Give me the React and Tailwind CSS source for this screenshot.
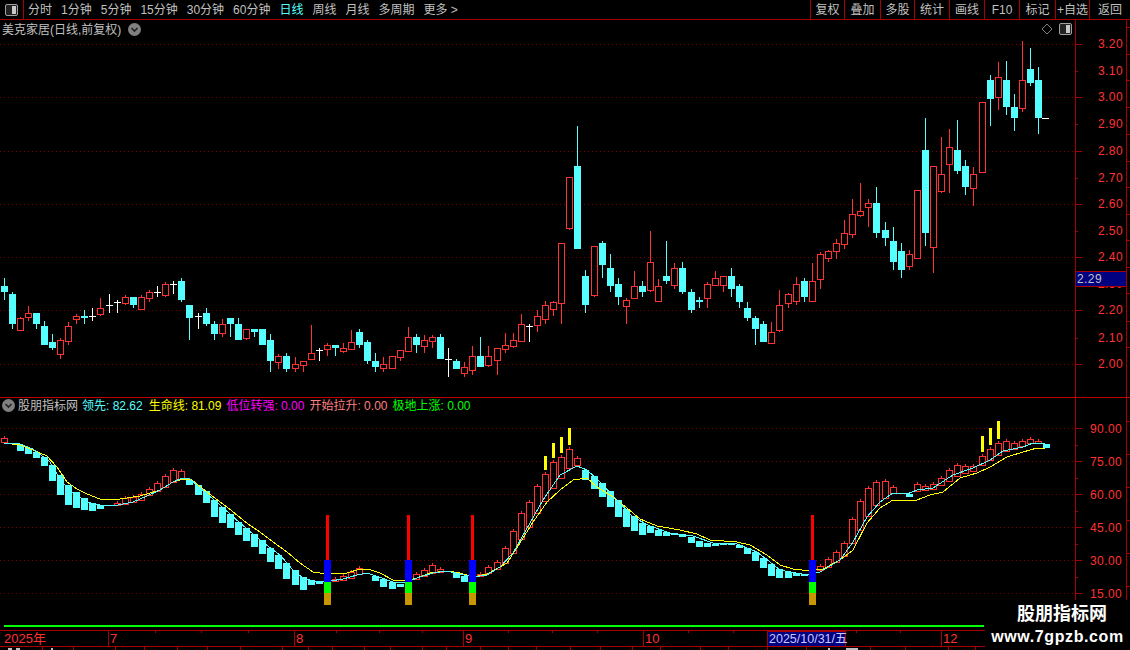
import React from 'react';

const FONT = '[font-family:"Liberation_Sans","Noto_Sans_CJK_SC",sans-serif]';
const RED = '#ff3232';
const CYAN = '#55ffff';
const AXIS = '#a80000';
const GRID = '#8a0000';

// x position of candle n, the terminal's bar spacing is not even
const BREAKS = [13, 24, 36, 48, 61, 73, 85, 97, 109, 121];
const cx = (n) => 4 + 8 * n + BREAKS.filter((b) => b <= n).length;

// [high, bodyTop, bodyBottom, low, type]
const CANDLES = [
  [278, 286, 292, 300, 'c'], [292, 294, 324, 329, 'c'], [317, 318, 330, 330, 'r'], [306, 313, 317, 321, 'r'],
  [313, 313, 324, 329, 'c'], [321, 326, 345, 345, 'c'], [334, 342, 348, 350, 'c'], [338, 340, 354, 359, 'r'],
  [322, 326, 341, 345, 'r'], [314, 316, 319, 324, 'r'], [310, 316, 318, 324, 'c'], [308, 316, 316, 321, 'w'],
  [298, 308, 314, 316, 'r'], [294, 305, 305, 313, 'w'], [300, 302, 302, 313, 'w'], [295, 297, 303, 305, 'r'],
  [297, 297, 305, 308, 'c'], [295, 297, 309, 309, 'r'], [290, 292, 298, 302, 'r'], [286, 292, 292, 297, 'w'],
  [282, 284, 295, 297, 'r'], [281, 284, 284, 294, 'w'], [278, 281, 300, 302, 'c'], [305, 305, 318, 340, 'c'],
  [313, 316, 316, 329, 'w'], [308, 313, 324, 326, 'c'], [321, 324, 334, 340, 'c'], [319, 324, 333, 337, 'r'],
  [318, 318, 324, 337, 'c'], [318, 324, 340, 340, 'c'], [329, 329, 338, 340, 'r'], [329, 329, 332, 337, 'c'],
  [329, 329, 345, 345, 'c'], [334, 340, 361, 372, 'c'], [354, 356, 362, 369, 'r'], [353, 356, 369, 372, 'c'],
  [357, 364, 368, 372, 'r'], [361, 361, 365, 372, 'r'], [325, 353, 359, 360, 'r'], [348, 350, 350, 361, 'w'],
  [343, 345, 349, 356, 'r'], [345, 345, 348, 356, 'c'], [343, 348, 351, 353, 'r'], [330, 342, 349, 350, 'r'],
  [329, 332, 345, 348, 'c'], [340, 342, 361, 364, 'c'], [353, 361, 367, 372, 'c'], [357, 364, 368, 372, 'r'],
  [356, 356, 368, 369, 'r'], [350, 350, 357, 361, 'r'], [327, 337, 351, 351, 'r'], [334, 337, 345, 353, 'c'],
  [335, 340, 346, 353, 'r'], [335, 337, 341, 348, 'r'], [334, 337, 359, 359, 'c'], [348, 359, 359, 377, 'w'],
  [359, 361, 369, 369, 'c'], [362, 367, 373, 377, 'r'], [346, 356, 370, 375, 'r'], [337, 356, 367, 367, 'c'],
  [346, 356, 365, 367, 'r'], [348, 348, 360, 375, 'r'], [333, 345, 349, 353, 'r'], [333, 340, 346, 348, 'r'],
  [314, 324, 341, 341, 'r'], [324, 326, 326, 342, 'w'], [310, 316, 325, 332, 'r'], [301, 305, 319, 324, 'r'],
  [301, 302, 309, 316, 'r'], [243, 243, 303, 324, 'r'], [177, 177, 228, 230, 'r'], [126, 166, 249, 249, 'c'],
  [270, 276, 305, 313, 'c'], [246, 246, 295, 297, 'r'], [241, 243, 265, 278, 'c'], [254, 268, 286, 292, 'c'],
  [278, 284, 297, 305, 'c'], [298, 300, 306, 324, 'r'], [271, 286, 298, 298, 'r'], [281, 286, 292, 297, 'c'],
  [231, 262, 290, 292, 'r'], [279, 286, 301, 301, 'r'], [241, 276, 281, 284, 'c'], [263, 268, 285, 289, 'r'],
  [262, 268, 292, 294, 'c'], [289, 292, 310, 313, 'c'], [297, 300, 302, 308, 'c'], [282, 284, 298, 308, 'r'],
  [271, 278, 285, 285, 'r'], [276, 276, 285, 292, 'r'], [268, 276, 289, 297, 'c'], [284, 286, 302, 308, 'c'],
  [302, 308, 318, 321, 'c'], [316, 318, 329, 345, 'c'], [321, 324, 342, 342, 'c'], [322, 332, 343, 343, 'r'],
  [290, 305, 330, 332, 'r'], [293, 294, 303, 308, 'r'], [277, 284, 301, 305, 'r'], [278, 281, 297, 302, 'c'],
  [263, 281, 301, 302, 'r'], [252, 254, 279, 289, 'r'], [250, 251, 258, 262, 'r'], [239, 243, 251, 259, 'r'],
  [220, 233, 244, 249, 'r'], [199, 214, 234, 238, 'r'], [183, 211, 215, 217, 'r'], [199, 203, 207, 227, 'r'],
  [187, 203, 233, 238, 'c'], [222, 230, 238, 246, 'c'], [227, 241, 262, 270, 'c'], [243, 251, 270, 278, 'c'],
  [250, 254, 266, 270, 'r'], [190, 190, 258, 258, 'r'], [118, 150, 233, 246, 'c'], [166, 166, 247, 273, 'r'],
  [137, 174, 191, 193, 'r'], [129, 147, 164, 193, 'r'], [120, 150, 171, 174, 'c'], [160, 166, 187, 195, 'c'],
  [167, 174, 188, 206, 'r'], [102, 102, 172, 172, 'r'], [75, 80, 99, 126, 'c'], [62, 77, 97, 110, 'r'],
  [61, 80, 107, 115, 'c'], [94, 107, 118, 131, 'c'], [41, 80, 108, 112, 'r'], [48, 69, 83, 86, 'c'],
  [67, 80, 118, 134, 'c'],
];

// [bodyTop, bodyBottom, type] per bar, null where only the lines show
const LOWER = [
  [438, 442, 'r'], null, [445, 451, 'c'], [448, 454, 'c'], [452, 458, 'c'], [457, 466, 'c'], [465, 481, 'c'], [475, 495, 'c'],
  [485, 505, 'c'], [492, 508, 'c'], [498, 510, 'c'], [503, 511, 'c'], [505, 509, 'c'], null, [503, 505, 'r'], [498, 504, 'r'],
  [497, 502, 'r'], [494, 500, 'r'], [489, 495, 'r'], [483, 491, 'r'], [476, 487, 'r'], [470, 482, 'r'], [471, 479, 'r'], [480, 485, 'c'],
  [485, 495, 'c'], [491, 503, 'c'], [500, 517, 'c'], [507, 523, 'c'], [514, 528, 'c'], [522, 535, 'c'], [528, 541, 'c'], [534, 547, 'c'],
  [540, 554, 'c'], [548, 562, 'c'], [555, 569, 'c'], [563, 579, 'c'], [570, 585, 'c'], [577, 590, 'c'], [580, 585, 'c'], [581, 584, 'c'],
  null, [579, 581, 'r'], [576, 580, 'r'], [572, 578, 'r'], [568, 574, 'r'], null, [576, 581, 'c'], [579, 587, 'c'],
  [582, 589, 'c'], [584, 587, 'c'], null, [574, 579, 'r'], [570, 576, 'r'], [565, 573, 'r'], [569, 572, 'r'], null,
  [573, 578, 'c'], [576, 582, 'c'], null, [574, 576, 'r'], [567, 573, 'r'], [562, 569, 'r'], [548, 563, 'r'], [531, 553, 'r'],
  [513, 539, 'r'], [502, 527, 'r'], [486, 513, 'r'], [474, 501, 'r'], [462, 488, 'r'], [457, 478, 'r'], [449, 468, 'r'], [458, 465, 'r'],
  [470, 480, 'c'], [476, 489, 'c'], [483, 497, 'c'], [491, 507, 'c'], [500, 517, 'c'], [509, 527, 'c'], [516, 531, 'c'], [523, 535, 'c'],
  [526, 533, 'c'], [530, 536, 'c'], [532, 536, 'c'], [533, 535, 'c'], [534, 537, 'c'], [537, 543, 'c'], [541, 547, 'c'], [543, 547, 'c'],
  [544, 546, 'c'], [544, 545, 'c'], [544, 545, 'c'], [545, 548, 'c'], [548, 554, 'c'], [552, 561, 'c'], [558, 568, 'c'], [564, 576, 'c'],
  [569, 578, 'c'], [572, 578, 'c'], [573, 576, 'c'], [574, 576, 'c'], null, [566, 570, 'r'], [559, 567, 'r'], [552, 562, 'r'],
  [543, 556, 'r'], [519, 543, 'r'], [501, 530, 'r'], [488, 516, 'r'], [482, 505, 'r'], [481, 498, 'r'], [487, 493, 'r'], null,
  [494, 497, 'c'], [484, 491, 'r'], [486, 490, 'r'], [484, 489, 'r'], [478, 485, 'r'], [470, 481, 'r'], [465, 476, 'r'], [466, 473, 'r'],
  [466, 471, 'r'], [456, 465, 'r'], [449, 460, 'r'], [443, 455, 'r'], [441, 451, 'r'], [443, 449, 'r'], [441, 446, 'r'], [439, 443, 'r'],
  [441, 443, 'r'], [444, 448, 'c'],
];

const LIFE_LINE = '4,443 20,445 33,450 47,456 57,467 67,482 77,489 87,494 100,499 120,499 140,496 160,490 173,482 183,479 192,480 207,492 227,507 248,524 260,532 273,542 287,552 300,563 313,572 320,573 347,573 360,569 368,569 380,573 393,580 405,581 417,578 430,573 447,571 460,573 473,577 487,574 500,567 507,563 520,543 533,522 547,502 560,490 573,480 587,478 597,487 613,497 627,508 640,519 657,526 680,530 697,534 710,540 737,542 750,545 767,555 780,565 793,569 810,571 823,569 840,560 853,550 867,523 880,508 893,500 907,501 917,500 930,495 943,492 960,478 977,473 990,467 1007,457 1023,452 1037,448 1045,448';
const LEAD_LINE = '4,443 20,444 33,449 50,462 62,482 73,493 87,502 100,505 118,505 133,502 147,496 160,490 173,482 182,478 190,479 200,488 220,505 240,523 260,540 280,555 293,570 303,578 313,581 330,581 343,579 357,575 367,573 376,576 393,582 405,583 417,578 433,573 447,571 460,574 473,577 487,575 500,567 513,553 530,523 543,500 560,475 577,466 587,470 600,482 617,500 633,517 650,526 670,533 693,536 713,543 737,544 757,552 770,562 780,570 807,575 820,572 840,560 853,542 867,517 880,502 893,493 907,494 917,490 933,488 953,475 973,468 990,460 1003,451 1023,447 1033,443 1045,443';

const MARKERS = [40, 50, 58, 100];
const YELLOW_BARS = [[545, 456, 14], [553, 443, 15], [561, 437, 16], [569, 428, 17], [982, 436, 16], [990, 428, 17], [998, 421, 18]];

const UPPER_GRID = [44, 97, 151, 204, 257, 310, 364];
const UPPER_LABELS = [[44, '3.20'], [71, '3.10'], [97, '3.00'], [124, '2.90'], [151, '2.80'], [178, '2.70'], [204, '2.60'], [231, '2.50'], [257, '2.40'], [284, '2.30'], [310, '2.20'], [338, '2.10'], [364, '2.00']];
const LOWER_GRID = [[428, '90.00'], [461, '75.00'], [494, '60.00'], [527, '45.00'], [560, '30.00'], [593, '15.00']];

const TOOLS = [
  { label: '分时' }, { label: '1分钟' }, { label: '5分钟' }, { label: '15分钟' }, { label: '30分钟' }, { label: '60分钟' },
  { label: '日线', active: true }, { label: '周线' }, { label: '月线' }, { label: '多周期' }, { label: '更多 >' },
];
const BUTTONS = [
  { label: '复权', w: 'w-[34px]' }, { label: '叠加', w: 'w-[36px]' }, { label: '多股', w: 'w-[34px]' },
  { label: '统计', w: 'w-[35px]' }, { label: '画线', w: 'w-[35px]' }, { label: 'F10', w: 'w-[35px]' },
  { label: '标记', w: 'w-[36px]' }, { label: '+自选', w: 'w-[34px]' }, { label: '返回', w: 'w-[41px]' },
];

const Candle = ({ n, h, t, b, l, type }) => {
  const x = cx(n);
  if (type === 'w') {
    return (
      <g stroke="#ffffff">
        <line x1={x + 0.5} x2={x + 0.5} y1={h} y2={l} />
        <line x1={x - 3} x2={x + 4} y1={t + 0.5} y2={t + 0.5} />
      </g>
    );
  }
  if (type === 'c') {
    return (
      <g>
        <line x1={x + 0.5} x2={x + 0.5} y1={h} y2={l} stroke={CYAN} />
        <rect x={x - 3} y={t} width={7} height={Math.max(b - t, 2)} fill={CYAN} />
      </g>
    );
  }
  return (
    <g stroke={RED} fill="#000000">
      <line x1={x + 0.5} x2={x + 0.5} y1={h} y2={l} />
      <rect x={x - 2.5} y={t + 0.5} width={6} height={b - t} />
    </g>
  );
};

const Chevron = () => (
  <svg width="13" height="13" viewBox="0 0 13 13" className="shrink-0">
    <circle cx="6.5" cy="6.5" r="6.5" fill="#808080" />
    <path d="M3.5 5 L6.5 8 L9.5 5" fill="none" stroke="#222222" strokeWidth="1.6" />
  </svg>
);

const PanelIcon = () => (
  <svg width="13" height="12" viewBox="0 0 13 12">
    <rect x="0.5" y="0.5" width="12" height="11" rx="1.5" fill="#222222" stroke="#a0a0a0" />
    <rect x="7" y="2" width="4" height="8" fill="#c8c8c8" />
  </svg>
);

const Grid = ({ rows }) =>
  rows.map((y) => (
    <line key={y} x1="0" x2="1075" y1={y + 0.5} y2={y + 0.5} stroke="#800000" strokeDasharray="1 3" shapeRendering="auto" />
  ));

const UpperAxis = () => (
  <svg width="55" height="377" viewBox="1075 20 55 377" className="shrink-0" shapeRendering="crispEdges">
    <line x1="1075.5" x2="1075.5" y1="20" y2="397" stroke={AXIS} />
    <line x1="1126.5" x2="1126.5" y1="20" y2="397" stroke={AXIS} />
    {UPPER_LABELS.map(([y, text], i) => (
      <g key={text}>
        <line x1="1075" x2={i % 2 === 0 ? 1082 : 1078} y1={y + 0.5} y2={y + 0.5} stroke={AXIS} />
        <line x1="1127" x2="1130" y1={y - 16.5} y2={y - 16.5} stroke={AXIS} />
        <text x="1098" y={y + 4} fill={RED} fontSize="12" letterSpacing="0.4" fontFamily="Liberation Sans" shapeRendering="auto">{text}</text>
      </g>
    ))}
  </svg>
);

const LowerAxis = () => (
  <svg width="55" height="227" viewBox="1075 398 55 227" className="shrink-0" shapeRendering="crispEdges">
    <line x1="1075.5" x2="1075.5" y1="398" y2="600" stroke={AXIS} />
    <line x1="1126.5" x2="1126.5" y1="398" y2="600" stroke={AXIS} />
    {LOWER_GRID.map(([y, text]) => (
      <g key={text}>
        <line x1="1075" x2="1082" y1={y + 0.5} y2={y + 0.5} stroke={AXIS} />
        <line x1="1075" x2="1078" y1={y + 17} y2={y + 17} stroke={AXIS} />
        <line x1="1127" x2="1130" y1={y - 6.5} y2={y - 6.5} stroke={AXIS} />
        <text x="1090" y={y + 5} fill={RED} fontSize="12" letterSpacing="0.4" fontFamily="Liberation Sans" shapeRendering="auto">{text}</text>
      </g>
    ))}
  </svg>
);

const TOP_TICKS = [155, 201, 248, 336, 379, 422, 508, 552, 597, 688, 733, 856, 900, 985];
const BOTTOM_TICKS = [42, 73, 115, 144, 177, 207, 240, 282, 308, 332, 364, 390, 422, 446, 480, 508, 536, 570, 600, 632, 660, 700, 728, 767, 806, 870, 905, 948, 975];
const MONTHS = [[108, '7'], [294, '8'], [463, '9'], [643, '10'], [941, '12']];

const TimeAxis = () => (
  <svg width="1130" height="20" viewBox="0 630 1130 20" className="shrink-0" shapeRendering="crispEdges">
    <line x1="0" x2="1130" y1="630.5" y2="630.5" stroke={AXIS} />
    <line x1="0" x2="1130" y1="646.5" y2="646.5" stroke={AXIS} />
    {TOP_TICKS.map((x) => <line key={x} x1={x + 0.5} x2={x + 0.5} y1="631" y2="633" stroke={AXIS} />)}
    {BOTTOM_TICKS.map((x) => <line key={x} x1={x + 0.5} x2={x + 0.5} y1="647" y2="650" stroke={AXIS} />)}
    <rect x="8" y="648" width="4" height="2" fill="#c0c0c0" />
    <rect x="16" y="648" width="4" height="2" fill="#c0c0c0" />
    <rect x="51" y="648" width="2" height="2" fill="#c0c0c0" />
    <rect x="828" y="648" width="2" height="2" fill="#c0c0c0" />
    <rect x="846" y="648" width="12" height="2" fill="#c0c0c0" />
    <text x="4" y="643" fill={RED} fontSize="13" fontFamily="Liberation Sans, Noto Sans CJK SC" shapeRendering="auto">2025年</text>
    {MONTHS.map(([x, text]) => (
      <g key={text}>
        <line x1={x + 0.5} x2={x + 0.5} y1="631" y2="646" stroke={AXIS} />
        <text x={x + 2} y="643" fill={RED} fontSize="13" fontFamily="Liberation Sans" shapeRendering="auto">{text}</text>
      </g>
    ))}
    <rect x="767.5" y="631.5" width="78" height="15" fill="#000080" stroke={AXIS} />
    <text x="769" y="643" fill="#c8c8ff" fontSize="12.5" fontFamily="Liberation Sans, Noto Sans CJK SC" shapeRendering="auto">2025/10/31/五</text>
  </svg>
);

export default function App() {
  return (
    <div className={`${FONT} relative flex h-[650px] w-[1130px] flex-col overflow-hidden bg-black text-[12px] leading-none text-[#c0c0c0]`}>
      {/* toolbar */}
      <div className="flex h-[20px] shrink-0 items-center border-b border-[#a80000]">
        <div className="flex h-full w-[24px] items-center justify-center border-r border-[#a80000]">
          <PanelIcon />
        </div>
        <div className="flex items-center gap-[9px] pl-[4px]">
          {TOOLS.map((t) => (
            <span key={t.label} className={t.active ? 'text-[#55ffff]' : ''}>{t.label}</span>
          ))}
        </div>
        <div className="ml-auto flex h-full">
          {BUTTONS.map((b) => (
            <div key={b.label} className={`${b.w} flex items-center justify-center border-l border-[#a80000]`}>{b.label}</div>
          ))}
        </div>
      </div>

      {/* price panel */}
      <div className="flex h-[377px] shrink-0">
        <div className="relative w-[1075px]">
          <svg width="1075" height="377" viewBox="0 20 1075 377" shapeRendering="crispEdges">
            <Grid rows={UPPER_GRID} />
            {CANDLES.map(([h, t, b, l, type], n) => (
              <Candle key={n} n={n} h={h} t={t} b={b} l={l} type={type} />
            ))}
            <line x1="1042" x2="1049" y1="118.5" y2="118.5" stroke="#ffffff" />
          </svg>
          <div className="absolute left-[2px] top-[3px] flex items-center gap-[7px]">
            <span className="text-[12px]">美克家居(日线,前复权)</span>
            <Chevron />
          </div>
          <div className="absolute right-[3px] top-[3px] flex items-center gap-[6px]">
            <svg width="12" height="12" viewBox="0 0 12 12">
              <path d="M6 1 L11 6 L6 11 L1 6 Z" fill="none" stroke="#808080" />
            </svg>
            <PanelIcon />
          </div>
        </div>
        <UpperAxis />
        <div className="absolute left-[1075px] top-[271px] flex h-[16px] w-[52px] items-center border border-[#a80000] bg-[#000080] pl-[1px] tracking-[0.4px]">2.29</div>
      </div>

      {/* indicator panel */}
      <div className="flex h-[228px] shrink-0 border-t border-[#c00000]">
        <div className="relative w-[1075px]">
          <svg width="1075" height="227" viewBox="0 398 1075 227" shapeRendering="crispEdges">
            <Grid rows={LOWER_GRID.map((g) => g[0])} />
            {LOWER.map((c, n) => {
              if (!c) return null;
              const x = cx(n);
              if (c[2] === 'c') return <rect key={n} x={x - 3} y={c[0]} width={7} height={c[1] - c[0]} fill={CYAN} />;
              return (
                <g key={n} stroke={RED}>
                  <line x1={x + 0.5} x2={x + 0.5} y1={c[0] - 2} y2={c[0]} />
                  <rect x={x - 2.5} y={c[0] + 0.5} width={6} height={c[1] - c[0]} fill="none" />
                </g>
              );
            })}
            {YELLOW_BARS.map(([x, y, h]) => <rect key={x} x={x - 1} y={y} width={3} height={h} fill="#ffff00" />)}
            <polyline points={LIFE_LINE} fill="none" stroke="#ffff00" />
            <polyline points={LEAD_LINE} fill="none" stroke={CYAN} />
            {MARKERS.map((n) => {
              const x = cx(n);
              return (
                <g key={n}>
                  <rect x={x - 1} y="515" width="3" height="45" fill="#ff0000" />
                  <rect x={x - 3} y="560" width="7" height="22" fill="#0000ff" />
                  <rect x={x - 3} y="582" width="7" height="11" fill="#00ff00" />
                  <rect x={x - 3} y="593" width="7" height="12" fill="#c89600" />
                </g>
              );
            })}
          </svg>
          <div className="absolute left-[2px] top-[1px] flex items-center">
            <Chevron />
            <span className="ml-[3px] mr-[4px]">股朋指标网</span>
            <span className="mr-[6px] text-[#55ffff]">领先: 82.62</span>
            <span className="mr-[5px] text-[#ffff00]">生命线: 81.09</span>
            <span className="mr-[5px] text-[#ff00ff]">低位转强: 0.00</span>
            <span className="mr-[5px] text-[#ff8080]">开始拉升: 0.00</span>
            <span className="text-[#00ff00]">极地上涨: 0.00</span>
          </div>
        </div>
        <LowerAxis />
      </div>

      {/* bottom strip */}
      <div className="mb-[3px] ml-[4px] h-[2px] w-[980px] shrink-0 bg-[#00ff00]" />
      <TimeAxis />

      {/* watermark */}
      <div className="absolute bottom-0 right-0 flex h-[50px] w-[145px] flex-col items-center justify-center gap-[6px] bg-black font-bold text-white">
        <span className="ml-[9px] text-[18px]">股朋指标网</span>
        <span className="text-[16px] tracking-[0.6px]">www.7gpzb.com</span>
      </div>
    </div>
  );
}
